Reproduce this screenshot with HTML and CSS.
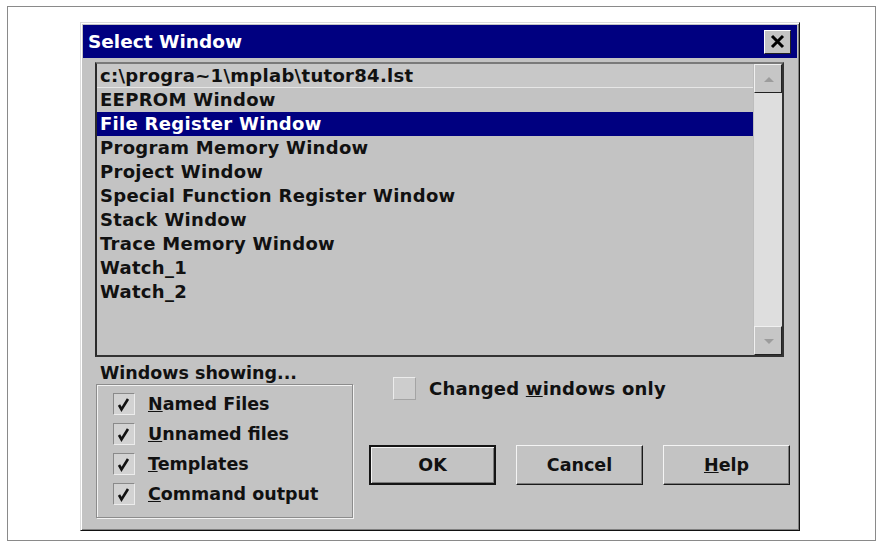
FILE: index.html
```html
<!DOCTYPE html>
<html lang="en">
  <head>
    <meta charset="utf-8" />
    <title>Select Window</title>
    <link rel="stylesheet" href="styles.css">
  </head>
  <body>
    <div class="frame">
      <div class="dialog">
        <div class="titlebar">
          <span class="title">Select Window</span>
          <span class="close">
            <svg width="25" height="22" viewBox="0 0 25 22">
              <path d="M7 5 L18 16 M18 5 L7 16" stroke="#000" stroke-width="3" />
            </svg>
          </span>
        </div>

        <div class="listbox">
          <ul class="items">
            <li class="focus">c:\progra~1\mplab\tutor84.lst</li>
            <li>EEPROM Window</li>
            <li class="selected">File Register Window</li>
            <li>Program Memory Window</li>
            <li>Project Window</li>
            <li>Special Function Register Window</li>
            <li>Stack Window</li>
            <li>Trace Memory Window</li>
            <li>Watch_1</li>
            <li>Watch_2</li>
          </ul>
          <div class="scrollbar">
            <div class="sb-btn">
              <svg width="24" height="24" viewBox="0 0 24 24">
                <polygon points="8,15 18,15 13,10" fill="#9c9c9c" />
              </svg>
            </div>
            <div class="sb-track"></div>
            <div class="sb-btn">
              <svg width="24" height="24" viewBox="0 0 24 24">
                <polygon points="8,10 18,10 13,15" fill="#9c9c9c" />
              </svg>
            </div>
          </div>
        </div>

        <div class="lower">
          <div class="showing">
            <div class="showing-label">Windows showing...</div>
            <div class="group">
              <div class="check">
                <span class="box"><svg width="20" height="20" viewBox="0 0 20 20"><path d="M5 11 L7.5 15.5 L14 5" stroke="#111" stroke-width="2.6" fill="none" /></svg></span>
                <span><u>N</u>amed Files</span>
              </div>
              <div class="check">
                <span class="box"><svg width="20" height="20" viewBox="0 0 20 20"><path d="M5 11 L7.5 15.5 L14 5" stroke="#111" stroke-width="2.6" fill="none" /></svg></span>
                <span><u>U</u>nnamed files</span>
              </div>
              <div class="check">
                <span class="box"><svg width="20" height="20" viewBox="0 0 20 20"><path d="M5 11 L7.5 15.5 L14 5" stroke="#111" stroke-width="2.6" fill="none" /></svg></span>
                <span><u>T</u>emplates</span>
              </div>
              <div class="check">
                <span class="box"><svg width="20" height="20" viewBox="0 0 20 20"><path d="M5 11 L7.5 15.5 L14 5" stroke="#111" stroke-width="2.6" fill="none" /></svg></span>
                <span><u>C</u>ommand output</span>
              </div>
            </div>
          </div>

          <div class="actions">
            <div class="check changed">
              <span class="box empty"></span>
              <span>Changed <u>w</u>indows only</span>
            </div>
            <div class="buttons">
              <div class="btn default">OK</div>
              <div class="btn">Cancel</div>
              <div class="btn"><u>H</u>elp</div>
            </div>
          </div>
        </div>
      </div>
    </div>
  </body>
</html>
```

FILE: styles.css
```css
body {
  margin: 0;
  background: #fff;
  font-family: "DejaVu Sans", "Liberation Sans", sans-serif;
  font-weight: bold;
  font-size: 17.5px;
  color: #111;
}

.frame {
  margin: 6px 0 0 7px;
  width: 867px;
  height: 533px;
  border: 1px solid #8a8a8a;
}

.dialog {
  box-sizing: border-box;
  margin: 15px 0 0 72px;
  width: 720px;
  height: 509px;
  padding: 2px;
  background: #c3c3c3;
  border: 1px solid;
  border-color: #dcdcdc #111 #111 #dcdcdc;
  box-shadow: inset 1px 1px #fff, inset -1px -1px #808080;
}

/* title bar */
.titlebar {
  height: 33px;
  background: #000080;
  display: flex;
  align-items: center;
  justify-content: space-between;
  padding: 0 6px 0 5px;
}

.title {
  color: #fff;
  font-size: 18.5px;
}

.close {
  box-sizing: border-box;
  width: 27px;
  height: 24px;
  background: #c3c3c3;
  border: 1px solid;
  border-color: #fff #222 #222 #fff;
  display: flex;
  align-items: center;
  justify-content: center;
}

/* list */
.listbox {
  box-sizing: border-box;
  margin: 4px 13px 0 12px;
  height: 295px;
  border: 2px solid;
  border-color: #7a7a7a #333 #333 #2a2a2a;
  display: flex;
}

.items {
  flex: 1;
  list-style: none;
  margin: 0;
  padding: 0;
  font-size: 18px;
  letter-spacing: 0.3px;
}

.items li {
  height: 24px;
  line-height: 24px;
  padding-left: 3px;
  white-space: nowrap;
}

.items li.focus {
  background: #c8c8c8;
  box-shadow: inset 0 -1px #e6e6e6;
}

.items li.selected {
  background: #000080;
  color: #fff;
}

.scrollbar {
  width: 28px;
  display: flex;
  flex-direction: column;
  background: #dedede;
  border-left: 1px solid #bdbdbd;
}

.sb-btn {
  box-sizing: border-box;
  height: 29px;
  background: #c6c6c6;
  border: 1px solid;
  border-color: #f0f0f0 #222 #222 #f0f0f0;
  display: flex;
  align-items: center;
  justify-content: center;
}

.sb-track {
  flex: 1;
}

/* lower area */
.lower {
  display: flex;
  padding-left: 13px;
}

.showing {
  width: 257px;
}

.showing-label {
  margin-top: 6px;
  height: 20px;
  line-height: 20px;
  padding-left: 4px;
}

.group {
  box-sizing: border-box;
  margin-top: 1px;
  height: 134px;
  padding: 4px 0 0 16px;
  border: 1px solid #8c8c8c;
  box-shadow: inset 1px 1px #f2f2f2, 1px 1px #f2f2f2;
}

.check {
  height: 30px;
  display: flex;
  align-items: center;
  gap: 13px;
}

.box {
  box-sizing: border-box;
  width: 22px;
  height: 22px;
  background: #d2d2d2;
  border: 1px solid;
  border-color: #8a8a8a #ececec #ececec #8a8a8a;
  display: flex;
  align-items: center;
  justify-content: center;
}

.box.empty {
  width: 23px;
  height: 23px;
  background: #cdcdcd;
  border-color: #ececec #a4a4a4 #a4a4a4 #ececec;
}

.actions {
  margin-left: 16px;
}

.changed {
  margin: 18px 0 0 24px;
  height: 26px;
  font-size: 18px;
  letter-spacing: 0.2px;
}

.buttons {
  display: flex;
  gap: 20px;
  margin-top: 44px;
}

.btn {
  box-sizing: border-box;
  width: 127px;
  height: 40px;
  display: flex;
  align-items: center;
  justify-content: center;
  background: #c3c3c3;
  border: 1px solid;
  border-color: #f4f4f4 #1a1a1a #1a1a1a #f4f4f4;
  box-shadow: inset -1px -1px #7c7c7c;
}

.btn.default {
  border: 2px solid #151515;
  box-shadow: inset 1px 1px #f4f4f4, inset -1px -1px #7c7c7c;
}
```
